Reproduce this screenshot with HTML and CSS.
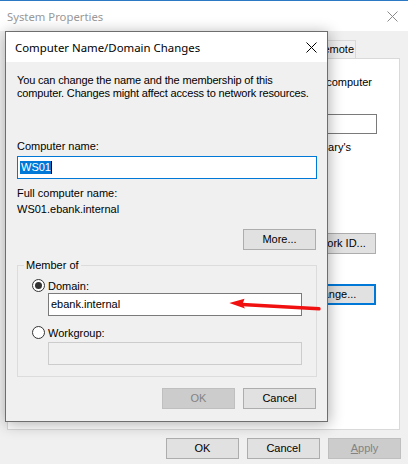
FILE: index.html
```html
<!DOCTYPE html>
<html>
<head>
<meta charset="utf-8">
<title>System Properties</title>
<link rel="stylesheet" href="styles.css">
</head>
<body>
<div class="window">
  <div class="titlebar">
    <span class="title">System Properties</span>
    <svg class="xicon xicon-inactive" width="11" height="11" viewBox="0 0 11 11"><path d="M0.5 0.5L10.5 10.5M10.5 0.5L0.5 10.5"/></svg>
  </div>
  <div class="wbody">
    <div class="tabs">
      <div class="tab tab-active"></div>
      <div class="tab"></div>
      <div class="tab"></div>
      <div class="tab"></div>
      <div class="tab tab-remote">Remote</div>
    </div>
    <div class="panel">
      <div class="prow p1"><span>your computer</span></div>
      <div class="prow p2"><span class="pinput"></span></div>
      <div class="prow p3"><span>"Mary's</span></div>
      <div class="prow p4"><button class="btn btn-netid">Network ID...</button></div>
      <div class="prow p5"><button class="btn btn-change btn-default">Change...</button></div>
    </div>
    <div class="wbuttons">
      <button class="btn">OK</button>
      <button class="btn">Cancel</button>
      <button class="btn" disabled><u>A</u>pply</button>
    </div>
  </div>
</div>

<div class="dialog">
  <div class="dtitle">
    <span class="dtitle-text">Computer Name/Domain Changes</span>
    <svg class="xicon" width="11" height="11" viewBox="0 0 11 11"><path d="M0.5 0.5L10.5 10.5M10.5 0.5L0.5 10.5"/></svg>
  </div>
  <div class="dbody">
    <p class="intro">You can change the name and the membership of this<br>computer. Changes might affect access to network resources.</p>
    <div class="lbl lbl-name">Computer name:</div>
    <div class="field field-focus"><span class="sel">WS01</span><span class="caret"></span></div>
    <div class="lbl lbl-full">Full computer name:</div>
    <div class="lbl lbl-value">WS01.ebank.internal</div>
    <div class="more-row"><button class="btn">More...</button></div>
    <fieldset class="group">
      <legend>Member of</legend>
      <div class="radio-row radio-row-dom"><span class="radio radio-checked"></span>Domain:</div>
      <div class="field field-dom">ebank.internal</div>
      <div class="radio-row radio-row-wg"><span class="radio"></span>Workgroup:</div>
      <div class="field field-dom field-dis"></div>
    </fieldset>
    <div class="dbuttons">
      <button class="btn" disabled>OK</button>
      <button class="btn">Cancel</button>
    </div>
  </div>
</div>

<svg class="arrow" width="100" height="20" viewBox="0 0 100 20">
  <path class="arrow-line" d="M20 10.5L97 14.8"/>
  <path class="arrow-head" d="M7.3 9L22.5 4.8L20.5 10.3L23 14.5Z"/>
</svg>
</body>
</html>
```

FILE: styles.css
```css
* { box-sizing: border-box; }
html, body { margin: 0; padding: 0; }
body {
  width: 408px;
  height: 464px;
  overflow: hidden;
  position: relative;
  background: #f0f0f0;
  font-family: "Liberation Sans", Arial, sans-serif;
  font-size: 11px;
  color: #000;
}

/* buttons */
.btn {
  width: 73px;
  height: 21px;
  padding: 0;
  margin: 0;
  border: 1px solid #adadad;
  background: #e1e1e1;
  font-family: "Liberation Sans", Arial, sans-serif;
  font-size: 11px;
  color: #000;
  line-height: 19px;
  text-align: center;
  white-space: nowrap;
}
.btn:disabled {
  background: #cccccc;
  border-color: #bfbfbf;
  color: #838383;
}
.btn-default { border: 2px solid #0078d7; line-height: 17px; }

/* background window */
.window {
  height: 464px;
  border-top: 1px solid #2b79c4;
  display: flex;
  flex-direction: column;
}
.titlebar {
  height: 30px;
  flex: none;
  background: #fff;
  display: flex;
  align-items: center;
  justify-content: space-between;
  padding: 0 10px 0 7px;
}
.title {
  font-family: "Noto Sans", sans-serif;
  font-size: 11.3px;
  color: #999;
}
.xicon { display: block; }
.xicon path { stroke: #000; stroke-width: 1; fill: none; }
.xicon-inactive path { stroke: #8a8a8a; }

.wbody { flex: 1; padding-top: 9px; }
.tabs {
  display: flex;
  margin-left: 7px;
  width: 349px;
  height: 18px;
}
.tab {
  flex: 1 1 auto;
  min-width: 0;
  overflow: hidden;
  white-space: nowrap;
  border: 1px solid #d9d9d9;
  border-bottom: none;
  margin-right: -1px;
  background: #f0f0f0;
  line-height: 16px;
  padding: 0 4px;
}
.tab-remote { flex: none; padding: 0 1px 0 4px; margin-right: 0; }

.panel {
  height: 372px;
  margin: 0 8px 0 7px;
  background: #fff;
  border: 1px solid #d9d9d9;
}
.prow {
  display: flex;
  justify-content: flex-end;
  align-items: center;
  white-space: nowrap;
  line-height: 13px;
}
.p1 { margin: 17px 27px 0 0; }
.p2 { margin: 25px 22px 0 0; }
.p3 { margin: 7px 48px 0 0; }
.p4 { margin: 79px 23px 0 0; }
.p5 { margin: 30px 23px 0 0; }
.pinput {
  display: block;
  width: 150px;
  height: 20px;
  border: 1px solid #7a7a7a;
  background: #fff;
}
.btn-netid { width: 84px; }
.btn-change { width: 87px; }

.wbuttons {
  display: flex;
  justify-content: flex-end;
  gap: 8px;
  margin-top: 8px;
  padding-right: 7px;
}

/* dialog */
.dialog {
  position: absolute;
  left: 5px;
  top: 31px;
  width: 323px;
  height: 391px;
  border: 1px solid #6e6e6e;
  background: #f0f0f0;
  box-shadow: 1px 2px 14px rgba(0, 0, 0, 0.32);
  display: flex;
  flex-direction: column;
}
.dtitle {
  height: 30px;
  flex: none;
  background: #fff;
  display: flex;
  align-items: center;
  justify-content: space-between;
  padding: 0 10px 0 9px;
}
.dtitle-text {
  font-family: "Noto Sans", sans-serif;
  font-size: 11.4px;
  color: #000;
}
.dbody {
  flex: 1;
  padding: 12px 10px 0 11px;
}
.intro { margin: 0; line-height: 13px; white-space: nowrap; letter-spacing: -0.15px; }
.lbl { line-height: 13px; }
.lbl-name { margin-top: 40px; }
.lbl-full { margin-top: 8px; }
.lbl-value { margin-top: 3px; }
.field {
  height: 23px;
  background: #fff;
  border: 1px solid #7a7a7a;
  padding: 0 2px;
  display: flex;
  align-items: center;
  line-height: 13px;
  margin-top: 3px;
}
.field-focus { border-color: #0078d7; }
.sel {
  background: #0078d7;
  color: #fff;
  padding: 0 0 0 1px;
  line-height: 13px;
}
.caret { width: 1px; height: 13px; background: #000; }
.more-row { display: flex; justify-content: flex-end; margin-top: 13px; padding-right: 1px; }

.group {
  margin: 9px 0 0 0;
  padding: 0 0 11px 0;
  border: 1px solid #dcdcdc;
  min-width: 0;
}
.group legend {
  margin-left: 6px;
  padding: 0 2px;
  line-height: 13px;
}
.radio-row {
  display: flex;
  align-items: center;
  gap: 3px;
  height: 13px;
  padding-left: 14px;
}
.radio-row-dom { margin-top: 7px; }
.radio-row-wg { margin-top: 10px; }
.radio {
  width: 13px;
  height: 13px;
  border: 1px solid #333;
  border-radius: 50%;
  background: #fff;
  display: flex;
  align-items: center;
  justify-content: center;
}
.radio-checked::after {
  content: "";
  width: 7px;
  height: 7px;
  border-radius: 50%;
  background: #333;
}
.field-dom { width: 254px; margin-left: 30px; margin-top: 1px; }
.field-dis { background: #f0f0f0; border-color: #cccccc; margin-top: 3px; }
.dbuttons {
  display: flex;
  justify-content: flex-end;
  gap: 8px;
  margin-top: 11px;
  padding-right: 1px;
}

/* annotation arrow */
.arrow { position: absolute; left: 222px; top: 294px; }
.arrow-line { stroke: #f01010; stroke-width: 3.4; stroke-linecap: round; fill: none; }
.arrow-head { fill: #f01010; }
```
